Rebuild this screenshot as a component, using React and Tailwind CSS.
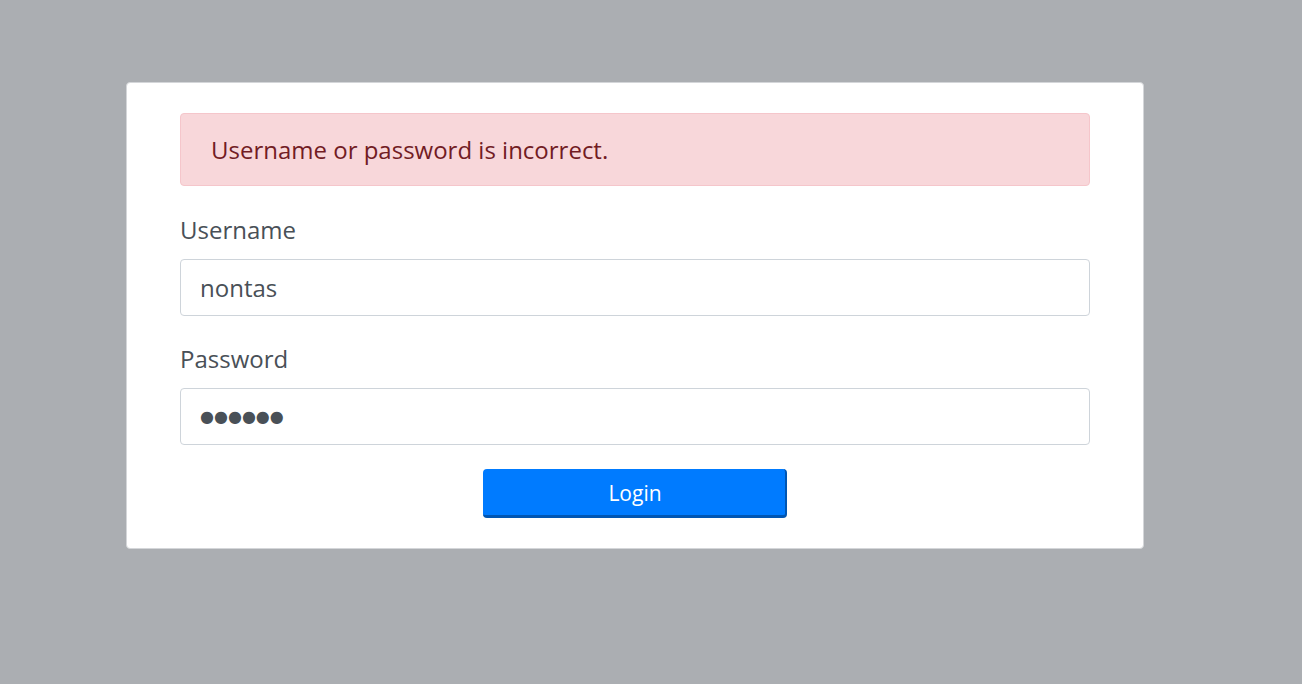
import React from 'react';

export default function App() {
  return (
    <div
      className="w-full h-[684px] bg-[#abaeb2] pt-[82px]"
      style={{ fontFamily: '"Open Sans", "Noto Sans", sans-serif' }}
    >
      <div className="ml-[126px] w-[1018px] bg-white border border-[#d4d6d9] rounded-[4px] px-[53px] pt-[30px] pb-[30px]">
        {/* alert */}
        <div className="bg-[#f8d7da] border border-[#f5c6cb] rounded-[4px] text-[#721c24] text-[24px] leading-[35px] px-[30px] py-[18px]">
          Username or password is incorrect.
        </div>

        <form className="mt-[27px]" onSubmit={e => e.preventDefault()}>
          <label className="block text-[#495057] text-[24px] leading-[33px] mb-[13px]">Username</label>
          <input
            type="text"
            defaultValue="nontas"
            className="block w-full h-[57px] border border-[#ced4da] rounded-[4px] px-[19px] text-[24px] text-[#495057] outline-none"
          />

          <label className="block text-[#495057] text-[24px] leading-[33px] mt-[26px] mb-[13px]">Password</label>
          <input
            type="text"
            readOnly
            value="●●●●●●"
            className="block w-full h-[57px] border border-[#ced4da] rounded-[4px] px-[19px] text-[16px] text-[#495057] outline-none font-['DejaVu_Sans',sans-serif]"
          />

          <div className="flex justify-center mt-[24px]">
            <button
              type="submit"
              className="w-[304px] h-[49px] bg-[#007bff] text-white text-[21px] pt-[3px] pl-[2px] rounded-[4px] border-r-2 border-b-[3px] border-[#0056b3]"
            >
              Login
            </button>
          </div>
        </form>
      </div>
    </div>
  );
}
